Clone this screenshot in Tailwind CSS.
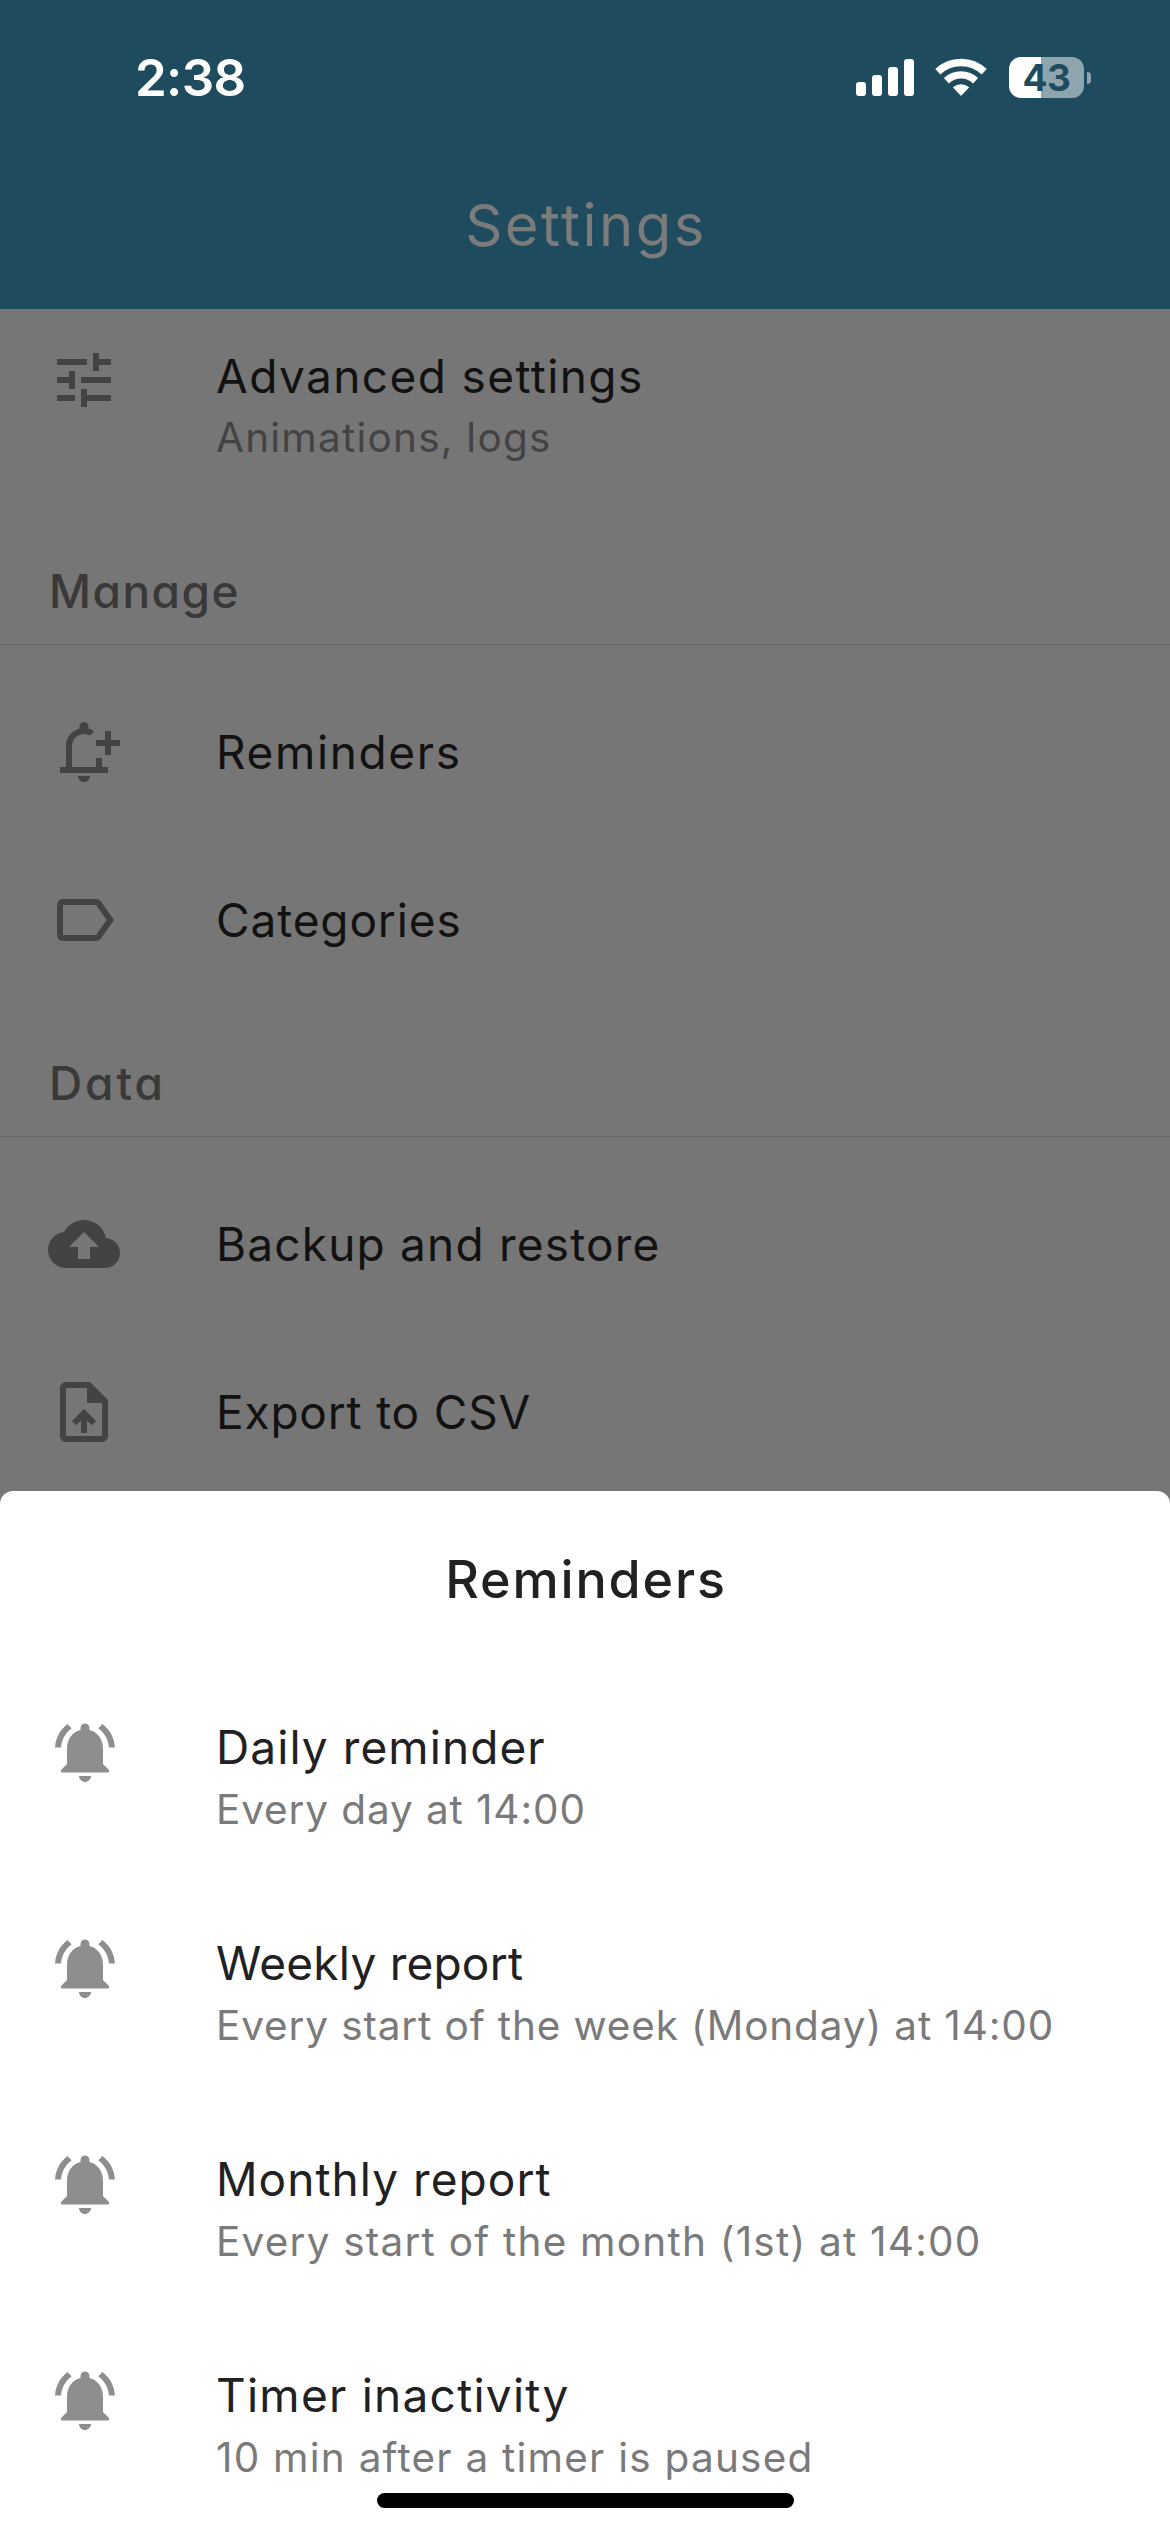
<!DOCTYPE html>
<html lang="en">
<head>
<meta charset="utf-8">
<title>Settings</title>
<script src="https://cdn.jsdelivr.net/npm/@tailwindcss/browser@4"></script>
</head>
<body class="bg-[#767676]">
<svg class="hidden">
  <symbol id="bell" viewBox="0 0 24 24"><path d="M7.58 4.08L6.15 2.65C3.75 4.48 2.17 7.3 2.03 10.5h2c.15-2.65 1.51-4.97 3.55-6.42zm12.39 6.42h2c-.15-3.2-1.73-6.02-4.12-7.85l-1.42 1.43c2.02 1.45 3.39 3.77 3.54 6.42zM18 11c0-3.07-1.64-5.64-4.5-6.32V4c0-.83-.67-1.5-1.5-1.5s-1.5.67-1.5 1.5v.68C7.63 5.36 6 7.92 6 11v5l-2 2v.8h16V18l-2-2v-5zm-6 11c.14 0 .27-.01.4-.04.65-.14 1.18-.58 1.44-1.18.1-.24.15-.5.15-.78h-4c.01 1.1.9 2 2.01 2z"/></symbol>
</svg>
<div class="relative h-[2532px] w-[1170px] overflow-hidden bg-[#767676] font-['Inter',sans-serif] text-[46px] leading-[60px] text-[#121212]">

  <header class="h-[309px] bg-[#1e4b5d]">
    <div class="flex h-[155px] items-center justify-between pl-[135px] pr-[79px]">
      <div class="text-[51px] font-semibold tracking-[-0.66px] text-white">2:38</div>
      <div class="flex items-center">
        <div class="flex h-[37px] items-end gap-[6px]">
          <div class="h-[14px] w-[10px] rounded-[3px] bg-white"></div>
          <div class="h-[21px] w-[10px] rounded-[3px] bg-white"></div>
          <div class="h-[29px] w-[10px] rounded-[3px] bg-white"></div>
          <div class="h-[37px] w-[10px] rounded-[3px] bg-white"></div>
        </div>
        <svg class="ml-[21px] h-[39px] w-[52px]" viewBox="0 0 52 39" fill="none" stroke="#fff" stroke-width="7.4"><path d="M2.8 13.8A33.6 33.6 0 0 1 49.2 13.8M11.4 22.7A21.3 21.3 0 0 1 40.6 22.7"/><path d="M18.6 29.4A12 12 0 0 1 33.4 29.4L26 37z" fill="#fff" stroke-width="1.2" stroke-linejoin="round"/></svg>
        <div class="ml-[22px] flex items-center gap-[3px]">
          <div class="flex h-[41px] w-[75px] items-center justify-center rounded-[12px] bg-linear-to-r from-white from-[32px] to-[#8ea5ae] to-[32px] text-[37px] font-bold leading-[41px] tracking-[-0.5px] text-[#1e4b5d]">43</div>
          <div class="h-[12px] w-[4px] rounded-r-full bg-[#8ea5ae]"></div>
        </div>
      </div>
    </div>
    <h1 class="pl-[2px] pt-[35px] text-center text-[58px] leading-[70px] tracking-[2.45px] text-[#7b7b7b]">Settings</h1>
  </header>

  <main>
    <div class="flex h-[203px] gap-24 pl-12 pt-[35px]">
      <svg class="size-[72px] fill-[#434343]" viewBox="0 0 24 24"><path d="M3 17v2h6v-2H3zM3 5v2h10V5H3zm10 16v-2h8v-2h-8v-2h-2v6h2zM7 9v2H3v2h4v2h2V9H7zm14 4v-2H11v2h10zm-6-4h2V7h4V5h-4V3h-2v6z"/></svg>
      <div class="pt-[2px]">
        <div class="tracking-[1.4px]">Advanced settings</div>
        <div class="mt-[2px] text-[40.5px] tracking-[1.23px] text-[#434343]">Animations, logs</div>
      </div>
    </div>

    <h2 class="h-[133px] border-b border-[#666] pl-[49px] pt-[49px] font-medium tracking-[1.5px] text-[#393939] [font-feature-settings:'cv11']">Manage</h2>
    <div class="pt-[23px]">
      <div class="flex h-[168px] items-center gap-24 pl-12">
        <svg class="size-[72px] fill-[#434343]" viewBox="0 0 24 24"><path d="M4 17h2v-7c0-2.79 1.91-5.14 4.5-5.8v-.7a1.5 1.5 0 0 1 3 0v.7c.65.16 1.27.5 1.85.95L14 6.5c-.6-.3-1.3-.5-2-.5a4 4 0 0 0-4 4v7h8v-3h2v3h2v2H4zM10 20h4c0 1.1-.9 2-2 2s-2-.9-2-2zM19 5h2v3h3v2h-3v3h-2v-3h-3V8h3z"/></svg>
        <div class="tracking-[1.63px]">Reminders</div>
      </div>
      <div class="flex h-[168px] items-center gap-24 pl-12">
        <svg class="size-[72px] fill-[#434343]" viewBox="0 0 24 24"><path d="M17.63 5.84C17.27 5.33 16.67 5 16 5L5 5.01C3.9 5.01 3 5.9 3 7v10c0 1.1.9 1.99 2 1.99L16 19c.67 0 1.27-.33 1.63-.84L22 12l-4.37-6.16zM16 17H5V7h11l3.55 5L16 17z"/></svg>
        <div class="tracking-[0.87px]">Categories</div>
      </div>
    </div>

    <h2 class="h-[133px] border-b border-[#666] pl-[49px] pt-[49px] font-medium tracking-[2.9px] text-[#393939] [font-feature-settings:'cv11']">Data</h2>
    <div class="pt-[23px]">
      <div class="flex h-[168px] items-center gap-24 pl-12">
        <svg class="size-[72px] fill-[#434343]" viewBox="0 0 24 24"><path d="M19.35 10.04C18.67 6.59 15.64 4 12 4 9.11 4 6.6 5.64 5.35 8.04 2.34 8.36 0 10.91 0 14c0 3.31 2.69 6 6 6h13c2.76 0 5-2.24 5-5 0-2.64-2.05-4.78-4.65-4.96zM14 13v4h-4v-4H7l5-5 5 5h-3z"/></svg>
        <div class="tracking-[1.19px]">Backup and restore</div>
      </div>
      <div class="flex h-[168px] items-center gap-24 pl-12">
        <svg class="size-[72px] fill-[#434343]" viewBox="0 0 24 24"><path d="M14 2H6c-1.1 0-1.99.9-1.99 2L4 20c0 1.1.89 2 1.99 2H18c1.1 0 2-.9 2-2V8l-6-6zm4 18H6V4h7v5h5v11zM8 15.01l1.41 1.41L11 14.84V19h2v-4.16l1.59 1.59L16 15.01 12.01 11 8 15.01z"/></svg>
        <div class="tracking-[0.81px]">Export to CSV</div>
      </div>
    </div>
  </main>

  <!-- Bottom sheet over the settings list -->
  <section class="absolute inset-x-0 bottom-0 h-[1041px] rounded-t-[13px] bg-white text-[#212121]">
    <h2 class="pl-[2px] pt-[54px] text-center text-[52px] font-medium leading-[70px] tracking-[1.85px] [font-feature-settings:'cv11']">Reminders</h2>
    <div class="pt-[101px]">
      <div class="flex h-[216px] gap-[95px] pl-[49px]">
        <svg class="size-[72px] fill-[#8e8e8e]"><use href="#bell"/></svg>
        <div class="pt-px">
          <div class="tracking-[1.08px]">Daily reminder</div>
          <div class="mt-[3px] text-[40.5px] tracking-[0.89px] text-[#7a7a7a]">Every day at 14:00</div>
        </div>
      </div>
      <div class="flex h-[216px] gap-[95px] pl-[49px]">
        <svg class="size-[72px] fill-[#8e8e8e]"><use href="#bell"/></svg>
        <div class="pt-px">
          <div class="tracking-[0.23px]">Weekly report</div>
          <div class="mt-[3px] text-[40.5px] tracking-[0.87px] text-[#7a7a7a]">Every start of the week (Monday) at 14:00</div>
        </div>
      </div>
      <div class="flex h-[216px] gap-[95px] pl-[49px]">
        <svg class="size-[72px] fill-[#8e8e8e]"><use href="#bell"/></svg>
        <div class="pt-px">
          <div class="tracking-[1.05px]">Monthly report</div>
          <div class="mt-[3px] text-[40.5px] tracking-[1.22px] text-[#7a7a7a]">Every start of the month (1st) at 14:00</div>
        </div>
      </div>
      <div class="flex gap-[95px] pl-[49px]">
        <svg class="size-[72px] fill-[#8e8e8e]"><use href="#bell"/></svg>
        <div class="pt-px">
          <div class="tracking-[1.25px]">Timer inactivity</div>
          <div class="mt-[3px] text-[40.5px] tracking-[1.23px] text-[#7a7a7a]">10 min after a timer is paused</div>
        </div>
      </div>
    </div>
  </section>

  <!-- Home indicator -->
  <div class="absolute bottom-6 left-[377px] h-[15px] w-[417px] rounded-full bg-black"></div>
</div>
</body>
</html>
